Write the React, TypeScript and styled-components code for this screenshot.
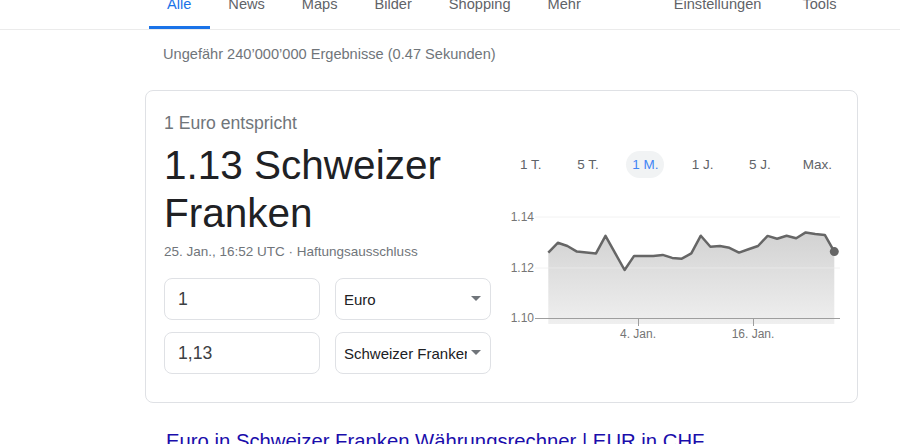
import styled, { createGlobalStyle } from 'styled-components';

const GlobalStyle = createGlobalStyle`
    body {
        margin: 0;
        background: #fff;
        font-family: "Liberation Sans", Arial, sans-serif;
        color: #202124;
    }
`;

/* ---------- top tabs ---------- */

const Header = styled.div`
    display: flex;
    align-items: flex-end;
    height: 29px;
    padding: 0 45px 0 148.5px;
    border-bottom: 1px solid #ebebeb;
`;

const NavItem = styled.div<{ $active?: boolean; $push?: boolean }>`
    padding: 0 18.5px 14px;
    margin-left: ${p => (p.$push ? 'auto' : '0')};
    margin-right: ${p => (p.$push ? '4px' : '0')};
    font-size: 14.6px;
    line-height: 16px;
    color: ${p => (p.$active ? '#1a73e8' : '#5f6368')};
    border-bottom: 3px solid ${p => (p.$active ? '#1a73e8' : 'transparent')};
    white-space: nowrap;
`;

const Stats = styled.div`
    margin: 14px 0 26px 163px;
    font-size: 14.6px;
    line-height: 20px;
    color: #70757a;
`;

/* ---------- converter card ---------- */

const Card = styled.div`
    box-sizing: border-box;
    width: 713px;
    margin-left: 145px;
    display: grid;
    grid-template-columns: 327px 344px;
    column-gap: 11px;
    padding: 21px 11px 28px 18px;
    border: 1px solid #dfe1e5;
    border-radius: 8px;
`;

const Left = styled.div`
    display: flex;
    flex-direction: column;
`;

const Subtitle = styled.div`
    font-size: 17.6px;
    line-height: 22px;
    color: #70757a;
    margin-bottom: 7px;
`;

const Amount = styled.div`
    font-size: 40.5px;
    line-height: 48px;
    color: #202124;
`;

const Meta = styled.div`
    margin-top: 6px;
    font-size: 13.5px;
    line-height: 18px;
    color: #70757a;
`;

const Rows = styled.div`
    margin-top: 17px;
    display: grid;
    grid-template-columns: 156px 156px;
    column-gap: 15px;
    row-gap: 12px;
`;

const AmountInput = styled.input`
    box-sizing: border-box;
    width: 156px;
    height: 42px;
    padding: 0 13px;
    border: 1px solid #dfe1e5;
    border-radius: 8px;
    font-family: inherit;
    font-size: 17.6px;
    color: #3c4043;
    outline: none;
`;

const SelectWrap = styled.div`
    position: relative;

    &::after {
        content: '';
        position: absolute;
        right: 10px;
        top: 18px;
        border-left: 5.5px solid transparent;
        border-right: 5.5px solid transparent;
        border-top: 5.5px solid #70757a;
        pointer-events: none;
    }
`;

const CurrencySelect = styled.select`
    box-sizing: border-box;
    width: 156px;
    height: 42px;
    padding: 0 23px 0 8px;
    border: 1px solid #dfe1e5;
    border-radius: 8px;
    background: #fff;
    appearance: none;
    font-family: inherit;
    font-size: 15px;
    color: #202124;
    outline: none;
`;

/* ---------- chart side ---------- */

const Right = styled.div`
    display: flex;
    flex-direction: column;
`;

const Ranges = styled.div`
    display: flex;
    margin-top: 39px;
`;

const RangeCell = styled.div`
    flex: 1;
    display: flex;
    justify-content: center;
`;

const RangeButton = styled.div<{ $active?: boolean }>`
    height: 27px;
    padding: 0 6px;
    border-radius: 14px;
    line-height: 27px;
    font-size: 13.5px;
    white-space: nowrap;
    color: ${p => (p.$active ? '#4285f4' : '#5f6368')};
    background: ${p => (p.$active ? '#f1f3f4' : 'transparent')};
`;

const Chart = styled.svg`
    display: block;
    margin-top: 12px;
    font-family: "Liberation Sans", Arial, sans-serif;
`;

const ResultLink = styled.a`
    display: block;
    margin: 25px 0 0 166px;
    font-size: 20.3px;
    line-height: 26px;
    color: #1a0dab;
    text-decoration: none;
    white-space: nowrap;
`;

const rates = [
    1.1259, 1.1298, 1.1285, 1.1263, 1.1259, 1.1256, 1.1325, 1.1258, 1.119, 1.1246,
    1.1246, 1.1246, 1.125, 1.1238, 1.1235, 1.1256, 1.1326, 1.1282, 1.1285, 1.1278,
    1.1259, 1.1272, 1.1285, 1.1325, 1.1314, 1.1326, 1.1316, 1.1339, 1.1333, 1.1329,
    1.1263,
];

const X0 = 548.3;
const X1 = 834.3;
const toX = (i: number) => X0 + (i * (X1 - X0)) / (rates.length - 1);
const toY = (r: number) => 318 - (r - 1.1) * 2525;

const RateChart = () => {
    const pts = rates.map((r, i) => `${toX(i).toFixed(1)},${toY(r).toFixed(1)}`);
    const last = rates.length - 1;
    return (
        <Chart width={344} height={160} viewBox="502 190 344 160">
            <defs>
                <linearGradient id="fillGrad" x1="0" y1="0" x2="0" y2="1">
                    <stop offset="0" stopColor="#d2d2d2" />
                    <stop offset="1" stopColor="#efefef" />
                </linearGradient>
            </defs>
            <polygon points={`${pts.join(' ')} ${X1},324 ${X0},324`} fill="url(#fillGrad)" />
            {[217, 268].map(y => (
                <line key={y} x1={535} x2={840} y1={y} y2={y} stroke="#ececec" strokeOpacity={0.7} />
            ))}
            <line x1={535} x2={840} y1={318.5} y2={318.5} stroke="#9e9e9e" />
            {[638, 753].map(x => (
                <line key={x} x1={x + 0.5} x2={x + 0.5} y1={318} y2={326} stroke="#9e9e9e" />
            ))}
            {[['1.14', 217], ['1.12', 268], ['1.10', 318]].map(([t, y]) => (
                <text key={t} x={534} y={Number(y) + 4} textAnchor="end" fontSize={12} fill="#757575">{t}</text>
            ))}
            <text x={638} y={338} textAnchor="middle" fontSize={12} fill="#757575">4. Jan.</text>
            <text x={753} y={338} textAnchor="middle" fontSize={12} fill="#757575">16. Jan.</text>
            <polyline points={pts.join(' ')} fill="none" stroke="#666" strokeWidth={2.5} strokeLinejoin="round" />
            <circle cx={toX(last)} cy={toY(rates[last])} r={4.5} fill="#666" />
        </Chart>
    );
};

const tabs = ['Alle', 'News', 'Maps', 'Bilder', 'Shopping', 'Mehr'];
const ranges = ['1 T.', '5 T.', '1 M.', '1 J.', '5 J.', 'Max.'];

export default function App() {
    return (
        <>
            <GlobalStyle />
            <Header>
                {tabs.map((t, i) => (
                    <NavItem key={t} $active={i === 0}>{t}</NavItem>
                ))}
                <NavItem $push>Einstellungen</NavItem>
                <NavItem>Tools</NavItem>
            </Header>
            <Stats>Ungefähr 240’000’000 Ergebnisse (0.47 Sekunden)</Stats>
            <Card>
                <Left>
                    <Subtitle>1 Euro entspricht</Subtitle>
                    <Amount>1.13 Schweizer Franken</Amount>
                    <Meta>25. Jan., 16:52 UTC · Haftungsausschluss</Meta>
                    <Rows>
                        <AmountInput defaultValue="1" />
                        <SelectWrap>
                            <CurrencySelect defaultValue="EUR">
                                <option value="EUR">Euro</option>
                                <option value="CHF">Schweizer Franken</option>
                            </CurrencySelect>
                        </SelectWrap>
                        <AmountInput defaultValue="1,13" />
                        <SelectWrap>
                            <CurrencySelect defaultValue="CHF">
                                <option value="EUR">Euro</option>
                                <option value="CHF">Schweizer Franken</option>
                            </CurrencySelect>
                        </SelectWrap>
                    </Rows>
                </Left>
                <Right>
                    <Ranges>
                        {ranges.map((r, i) => (
                            <RangeCell key={r}>
                                <RangeButton $active={i === 2}>{r}</RangeButton>
                            </RangeCell>
                        ))}
                    </Ranges>
                    <RateChart />
                </Right>
            </Card>
            <ResultLink href="#">Euro in Schweizer Franken Währungsrechner | EUR in CHF</ResultLink>
        </>
    );
}
